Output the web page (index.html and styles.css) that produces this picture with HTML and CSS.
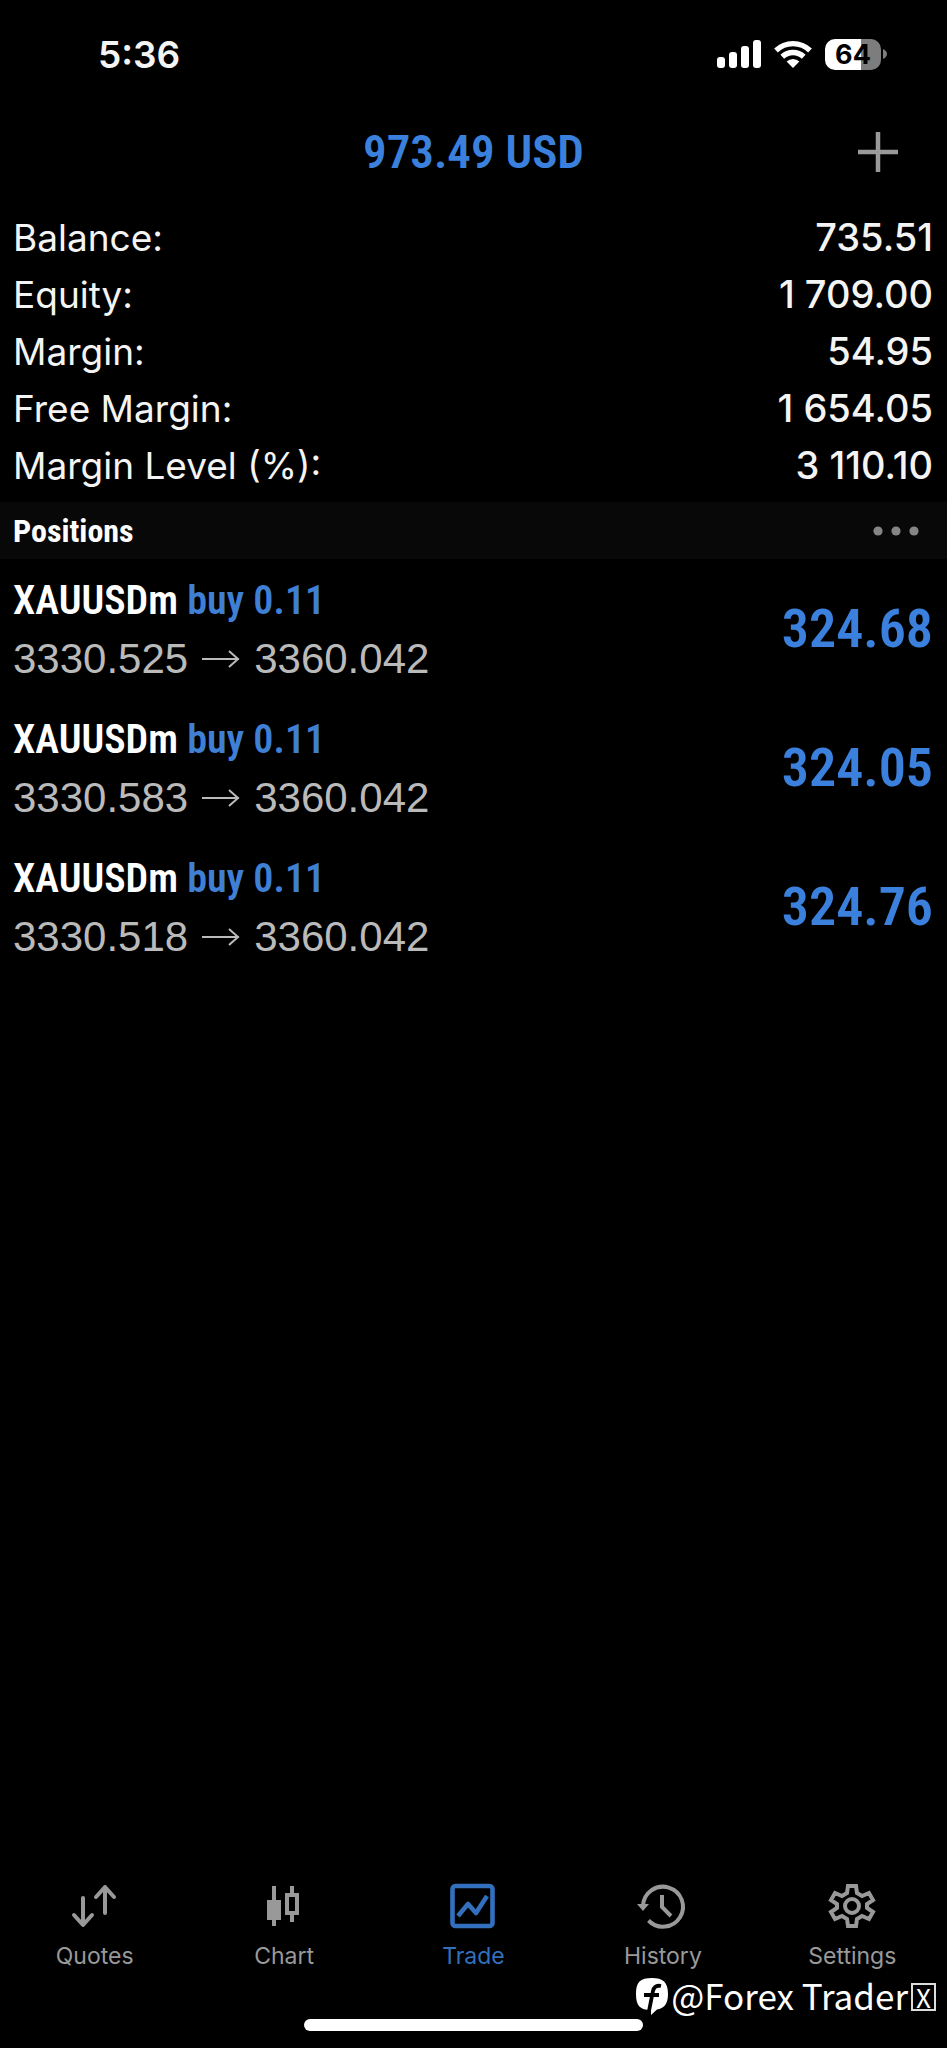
FILE: index.html
```html
<!DOCTYPE html>
<html lang="en">
<head>
<meta charset="utf-8">
<meta name="viewport" content="width=device-width, initial-scale=1">
<title>Trade</title>
<link rel="stylesheet" href="styles.css">
</head>
<body>
<div class="screen">
  <div class="status">
    <span class="clock">5:36</span>
    <div class="status-icons">
      <svg class="signal" width="44" height="28" viewBox="0 0 44 28" fill="#fff">
        <rect x="0" y="17" width="8" height="11" rx="3"/>
        <rect x="12" y="12" width="8" height="16" rx="3"/>
        <rect x="24" y="6" width="8" height="22" rx="3"/>
        <rect x="36" y="0" width="8" height="28" rx="3"/>
      </svg>
      <svg class="wifi" width="38" height="28" viewBox="0 0 38 28">
        <g fill="none" stroke="#fff" stroke-width="5.4">
          <path d="M2 10.5a24.5 24.5 0 0 1 34 0"/>
          <path d="M8.300 16.800a15.500 15.500 0 0 1 21.400 0"/>
        </g>
        <path fill="#fff" d="M12.600 21.500a9.200 9.200 0 0 1 12.800 0L19 28z"/>
      </svg>
      <div class="battery">
        <span class="battery-level">64</span>
        <svg width="4" height="10" viewBox="0 0 4 10"><path fill="#7d7d7d" d="M0 0Q4 2 4 5T0 10z"/></svg>
      </div>
    </div>
  </div>

  <header class="title-bar">
    <h1>973.49 USD</h1>
    <button class="add" aria-label="New order">
      <svg width="42" height="42" viewBox="0 0 42 42" stroke="#999" stroke-width="4.500"><path d="M21 1v40M1 21h40"/></svg>
    </button>
  </header>

  <main>
    <dl class="summary">
      <div><dt>Balance:</dt><dd>735.51</dd></div>
      <div><dt>Equity:</dt><dd>1 709.00</dd></div>
      <div><dt>Margin:</dt><dd>54.95</dd></div>
      <div><dt>Free Margin:</dt><dd>1 654.05</dd></div>
      <div><dt>Margin Level (%):</dt><dd>3 110.10</dd></div>
    </dl>

    <div class="section-head">
      <h2>Positions</h2>
      <button class="more" aria-label="More">
        <svg width="46" height="10" viewBox="0 0 46 10" fill="#858585"><circle cx="5" cy="5" r="4.600"/><circle cx="23" cy="5" r="4.600"/><circle cx="41" cy="5" r="4.600"/></svg>
      </button>
    </div>

    <ul class="positions">
      <li>
        <div>
          <p class="symbol">XAUUSDm <span>buy 0.11</span></p>
          <p class="prices">3330.525 <svg class="arrow" viewBox="0 0 38 18"><path d="M0 9h37M27 1l9 8-9 8"/></svg> 3360.042</p>
        </div>
        <strong>324.68</strong>
      </li>
      <li>
        <div>
          <p class="symbol">XAUUSDm <span>buy 0.11</span></p>
          <p class="prices">3330.583 <svg class="arrow" viewBox="0 0 38 18"><path d="M0 9h37M27 1l9 8-9 8"/></svg> 3360.042</p>
        </div>
        <strong>324.05</strong>
      </li>
      <li>
        <div>
          <p class="symbol">XAUUSDm <span>buy 0.11</span></p>
          <p class="prices">3330.518 <svg class="arrow" viewBox="0 0 38 18"><path d="M0 9h37M27 1l9 8-9 8"/></svg> 3360.042</p>
        </div>
        <strong>324.76</strong>
      </li>
    </ul>
  </main>

  <footer>
    <nav class="tabs">
      <a href="#quotes">
        <svg viewBox="0 0 48 48" fill="none" stroke="currentColor" stroke-width="4" stroke-linecap="round" stroke-linejoin="round"><path d="M12 16v26M3 33l9 10 9-10M34 31V5M25 15l9-10 9 10"/></svg>
        Quotes
      </a>
      <a href="#chart">
        <svg viewBox="0 0 48 48" fill="currentColor"><path d="M12 4h4v14h5v20h-5v6h-4v-6H7V18h5z"/><path fill-rule="evenodd" d="M30 4h4v7h5v22h-5v7h-4v-7h-5V11h5zM29 15v14h6V15z"/></svg>
        Chart
      </a>
      <a class="active" href="#trade" aria-current="page">
        <svg viewBox="0 0 48 48" fill="none" stroke="currentColor" stroke-width="4.600"><rect x="3.500" y="4" width="40" height="40" rx="3"/><path d="M9 34l10-12 8 9 11-17" stroke-linejoin="round"/></svg>
        Trade
      </a>
      <a href="#history">
        <svg viewBox="0 0 48 48" fill="none" stroke="currentColor" stroke-width="4"><path d="M4 24a20 20 0 1 1 5.500 14.500"/><path fill="currentColor" stroke="none" d="M-2 22h12l-6 7z"/><path d="M23 13v12l9 9"/></svg>
        History
      </a>
      <a href="#settings">
        <svg viewBox="0 0 48 48" fill="none" stroke="currentColor" stroke-width="4"><path d="M20 4h8l1 7 5 3 7-3 4 7-6 4v4l6 4-4 7-7-3-5 3-1 7h-8l-1-7-5-3-7 3-4-7 6-4v-4l-6-4 4-7 7 3 5-3z"/><circle cx="24" cy="24" r="7"/></svg>
        Settings
      </a>
    </nav>
    <div class="home-bar"></div>
    <div class="watermark">
      <svg width="32" height="37" viewBox="0 0 32 37"><path fill="#fff" d="M16 0C27 0 32 4 32 16c0 10-4 14.500-11 15.500L15 37v-5C4 32 0 28 0 16S4 0 16 0z"/><path fill="none" stroke="#000" stroke-width="3.800" d="M25 8c-5-1-7 1-8 5l-4 20M8 17h15"/></svg>
      <span class="handle">@Forex Trader</span>
      <span class="glyph-box">X</span>
    </div>
  </footer>
</div>
</body>
</html>
```
FILE: styles.css
```css
* { box-sizing: border-box; margin: 0; padding: 0; }

body {
  background: #000;
  color: #f4f4f4;
  font-family: Inter, "Liberation Sans", sans-serif;
}

button {
  background: none;
  border: 0;
  display: flex;
}

.screen {
  min-height: 100vh;
  display: flex;
  flex-direction: column;
}

main { flex: 1; }

/* Status bar */
.status {
  height: 108px;
  padding: 0 60px 0 98px;
  display: flex;
  align-items: center;
  justify-content: space-between;
}

.clock {
  font-size: 37px;
  font-weight: 600;
}

.status-icons {
  display: flex;
  align-items: center;
  gap: 13px;
}

.battery {
  display: flex;
  align-items: center;
  gap: 2px;
}

.battery-level {
  width: 56px;
  height: 31px;
  border-radius: 10px;
  background: linear-gradient(to right, #fff 64%, #7d7d7d 64%);
  color: #000;
  font-size: 27px;
  font-weight: 700;
  line-height: 31px;
  text-align: center;
}

/* Title */
.title-bar {
  height: 88px;
  padding: 0 48px;
  display: grid;
  grid-template-columns: 1fr auto 1fr;
  align-items: center;
}

h1 {
  grid-column: 2;
  padding-bottom: 2px;
  color: #3a80dc;
  font: 600 47px "Roboto Condensed", "Open Sans Condensed", sans-serif;
}

.add { justify-self: end; }

/* Account summary */
.summary {
  padding: 13px 14px 8px 13px;
  font-size: 37px;
  line-height: 57px;
}

.summary div {
  display: flex;
  justify-content: space-between;
}

dd {
  font-size: 38px;
  font-weight: 500;
}

/* Positions */
.section-head {
  height: 57px;
  padding: 0 28px 0 13px;
  background: #080808;
  display: flex;
  align-items: center;
  justify-content: space-between;
}

h2 {
  color: #fff;
  font: bold 32px "Roboto Condensed", sans-serif;
}

.positions { list-style: none; }

.positions li {
  padding: 13px 14px 10px 13px;
  display: flex;
  align-items: center;
  justify-content: space-between;
}

.symbol {
  color: #fff;
  font: 600 40px/58px "Roboto Condensed", sans-serif;
}

.symbol span { color: #3f7fd4; }

.prices {
  color: #bababa;
  font: 42px/58px "Liberation Sans", Arial, sans-serif;
  display: flex;
  align-items: center;
  gap: 14px;
}

.arrow {
  width: 38px;
  height: 18px;
  fill: none;
  stroke: currentColor;
  stroke-width: 2;
}

.positions strong {
  padding-bottom: 4px;
  color: #3a80dc;
  font: 600 54px "Roboto Condensed", sans-serif;
}

/* Tabs */
footer { position: relative; }

.tabs {
  display: grid;
  grid-template-columns: repeat(5, 1fr);
}

.tabs a {
  color: #999;
  font-size: 23px;
  line-height: 30px;
  text-decoration: none;
  display: flex;
  flex-direction: column;
  align-items: center;
  gap: 11px;
}

.tabs svg {
  width: 48px;
  height: 48px;
  overflow: visible;
}

.tabs .active { color: #3270bd; }

.home-bar {
  width: 35.7%;
  height: 12px;
  margin: 48px auto 17px;
  border-radius: 6px;
  background: #fff;
}

.watermark {
  position: absolute;
  right: 11px;
  bottom: 33px;
  color: #fff;
  font: 400 35px/34px "Noto Sans CJK SC", "Noto Sans", sans-serif;
  display: flex;
  align-items: center;
  gap: 3px;
}

.handle { padding-bottom: 3px; }

.glyph-box {
  width: 25px;
  height: 28px;
  border: 2px solid #ddd;
  font-size: 26px;
  line-height: 24px;
  text-align: center;
}
```
